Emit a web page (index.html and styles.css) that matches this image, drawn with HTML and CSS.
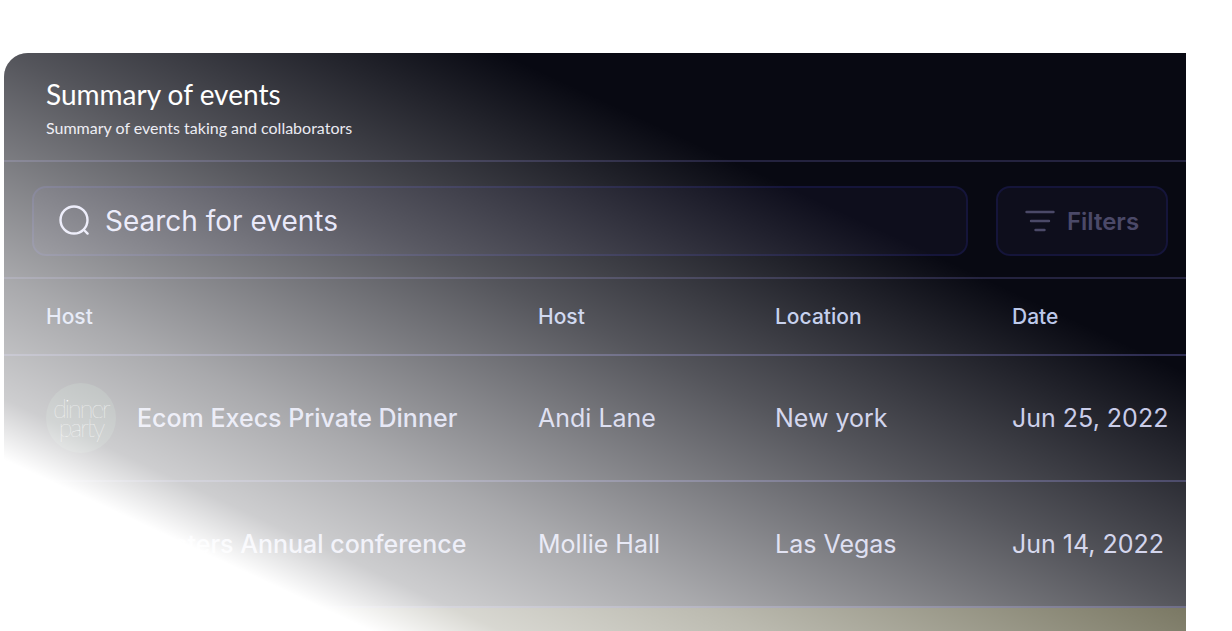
FILE: index.html
```html
<!DOCTYPE html>
<html lang="en">
<head>
  <meta charset="UTF-8" />
  <title>Summary of events</title>
  <link rel="stylesheet" href="styles.css">
</head>
<body>
  <div class="card">
    <div class="card-header">
      <h2>Summary of events</h2>
      <p>Summary of events taking and collaborators</p>
    </div>

    <div class="toolbar">
      <div class="search">
        <svg width="34" height="34" viewBox="0 0 34 34" fill="none" stroke="currentColor" stroke-width="2.4" stroke-linecap="round">
          <circle cx="16" cy="16" r="13.5"/>
          <path d="M26 26l3.6 3.6"/>
        </svg>
        <span>Search for events</span>
      </div>
      <div class="filters">
        <svg width="30" height="22" viewBox="0 0 30 22" fill="none" stroke="currentColor" stroke-width="2.4" stroke-linecap="round">
          <path d="M1.500 2h27M6 11h18M10.500 20h9"/>
        </svg>
        <span>Filters</span>
      </div>
    </div>

    <div class="row row-head">
      <div>Host</div>
      <div>Host</div>
      <div>Location</div>
      <div>Date</div>
    </div>

    <div class="row">
      <div class="event">
        <div class="avatar"><span>dinner</span><span>party</span></div>
        <span class="event-name">Ecom Execs Private Dinner</span>
      </div>
      <div>Andi Lane</div>
      <div>New york</div>
      <div>Jun 25, 2022</div>
    </div>

    <div class="row">
      <div class="event">
        <div class="avatar avatar-empty"></div>
        <span class="event-name">Masters Annual conference</span>
      </div>
      <div>Mollie Hall</div>
      <div>Las Vegas</div>
      <div>Jun 14, 2022</div>
    </div>

    <div class="row row-last"></div>

    <div class="fade"></div>
  </div>
</body>
</html>
```

FILE: styles.css
```css
html, body {
  height: 100%;
}

body {
  margin: 0;
  background-color: #fff;
  font-family: Inter, "Liberation Sans", sans-serif;
  overflow: hidden;
  padding: 53px 46px 0 4px;
  box-sizing: border-box;
}

.card {
  position: relative;
  height: 578px;
  overflow: hidden;
  background-color: #080912;
  border-radius: 24px 0 0 0;
  color: #c3c6e6;
}

/* Diagonal wash to white over the whole card */
.fade {
  position: absolute;
  inset: 0;
  background: linear-gradient(205deg,
    rgba(255, 255, 255, 0) 289px,
    rgba(255, 255, 255, 0.31) 499px,
    rgba(255, 255, 255, 0.65) 705px,
    rgba(255, 255, 255, 0.8) 813px,
    rgba(255, 255, 255, 1) 868px);
}

/* Header */
.card-header {
  height: 107px;
  padding: 24px 0 0 42px;
  box-sizing: border-box;
  border-bottom: 2px solid #24233f;
  box-sizing: content-box;
  height: 83px;
}

.card-header h2 {
  margin: 0;
  font-family: Lato, sans-serif;
  font-size: 28px;
  font-weight: 400;
  line-height: 34px;
  color: #fff;
}

.card-header p {
  margin: 7px 0 0;
  font-family: Lato, sans-serif;
  font-size: 16px;
  line-height: 20px;
  color: #e4e4ee;
}

/* Search and filters */
.toolbar {
  display: flex;
  gap: 28px;
  height: 117px;
  padding: 24px 18px 0 28px;
  box-sizing: border-box;
  border-bottom: 2px solid #24233f;
}

.search,
.filters {
  display: flex;
  align-items: center;
  height: 70px;
  box-sizing: border-box;
  background-color: #0e0e1c;
  border: 2px solid #15153a;
  border-radius: 14px;
}

.search {
  flex: 1;
  gap: 13px;
  padding-left: 24px;
  font-size: 28px;
  color: #dcdcf6;
}

.filters {
  width: 172px;
  flex: none;
  justify-content: center;
  gap: 12px;
  font-size: 24px;
  font-weight: 600;
  color: #4b4968;
}

/* Table rows */
.row {
  display: grid;
  grid-template-columns: 492px 237px 237px 1fr;
  align-items: center;
  height: 124px;
  padding-left: 42px;
  border-bottom: 2px solid #2e2d52;
  font-size: 25px;
}

.row-head {
  height: 75px;
  font-size: 21px;
  font-weight: 500;
  color: #bcc8ea;
}

.row-last {
  height: 40px;
  border-bottom: 0;
  background-color: #3d3a1c;
}

.event {
  display: flex;
  align-items: center;
  gap: 21px;
}

.event-name {
  font-weight: 500;
  white-space: nowrap;
}

.avatar {
  display: flex;
  flex-direction: column;
  align-items: center;
  justify-content: center;
  width: 70px;
  height: 70px;
  flex: none;
  border-radius: 50%;
  background-color: #1e2c2a;
  font-family: Lato, sans-serif;
  font-size: 25px;
  font-weight: 100;
  line-height: 19px;
  letter-spacing: -2px;
  color: #fff;
}

.avatar-empty {
  background-color: #ccc;
}
```
